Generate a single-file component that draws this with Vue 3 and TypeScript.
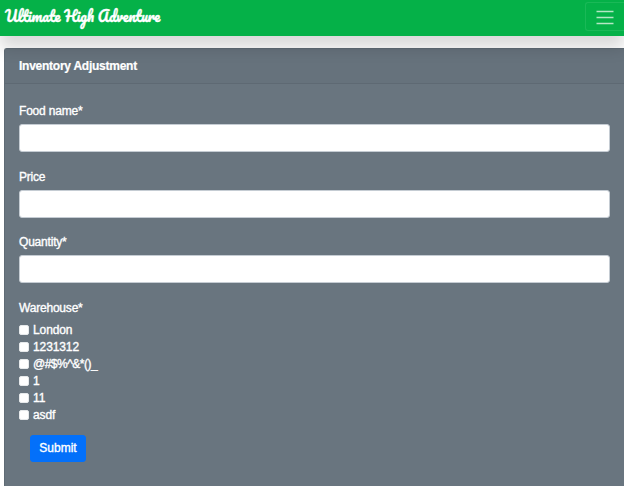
<script setup lang="ts">
import { reactive, ref } from 'vue'

interface Field {
  id: string
  label: string
}

const fields: Field[] = [
  { id: 'food', label: 'Food name*' },
  { id: 'price', label: 'Price' },
  { id: 'quantity', label: 'Quantity*' },
]
const values = reactive<Record<string, string>>({ food: '', price: '', quantity: '' })
const warehouses: string[] = ['London', '1231312', '@#$%^&*()_', '1', '11', 'asdf']
const selected = ref<string[]>([])
</script>

<template>
  <div class="page">
    <header class="navbar">
      <a class="brand">Ultimate High Adventure</a>
      <button class="toggler" type="button">
        <svg width="20" height="16" viewBox="0 0 20 16">
          <path d="M1.5 2.5h17M1.5 8.5h17M1.5 14.5h17" fill="none" stroke="#b4e7c4" stroke-width="1.3" />
        </svg>
      </button>
    </header>
    <main class="card">
      <div class="card-header">Inventory Adjustment</div>
      <form class="card-body" @submit.prevent>
        <div v-for="field in fields" :key="field.id" class="group">
          <label class="label" :for="field.id">{{ field.label }}</label>
          <input :id="field.id" v-model="values[field.id]" class="control" type="text" />
        </div>
        <div class="label">Warehouse*</div>
        <div class="options">
          <label v-for="name in warehouses" :key="name" class="option">
            <input v-model="selected" class="check" type="checkbox" :value="name" />
            <span :class="{ symbols: name.startsWith('@') }">{{ name }}</span>
          </label>
        </div>
        <button class="submit" type="submit">Submit</button>
      </form>
    </main>
  </div>
</template>

<style>
body {
  background: #fff;
  overflow: hidden;
}
</style>

<style scoped>
.page {
  height: 486px;
  overflow: hidden;
  display: flex;
  flex-direction: column;
  font-family: "Helvetica Neue", "Liberation Sans", Arial, sans-serif;
  font-size: 12px;
  color: #fff;
}
.page *,
.page {
  box-sizing: border-box;
}
.navbar {
  flex: none;
  height: 36px;
  display: flex;
  align-items: center;
  justify-content: space-between;
  padding-left: 5px;
  background: #05b148;
  box-shadow: 0 12px 16px rgba(0, 0, 0, 0.15);
  z-index: 1;
}
.brand {
  font-family: Pacifico, cursive;
  font-size: 14.3px;
  font-weight: 400;
  line-height: 20px;
  white-space: nowrap;
  padding-bottom: 4px;
  -webkit-text-stroke: 0.35px #fff;
}
.toggler {
  width: 39px;
  height: 29px;
  margin-bottom: 4px;
  padding: 2px 0 0;
  display: flex;
  align-items: center;
  justify-content: center;
  background: none;
  border: 1px solid #1ab957;
  border-right: 0;
  border-radius: 3px 0 0 3px;
}
.card {
  flex: 1;
  margin: 12px 0 0 4px;
  background: #69757f;
  border-left: 1px solid #5f6b75;
  border-top: 1px solid #5f6b75;
  border-radius: 3px 0 0 0;
}
.card-header {
  height: 35px;
  padding-left: 14px;
  line-height: 34px;
  font-weight: 700;
  letter-spacing: -0.25px;
  background: #66727c;
  border-bottom: 1px solid #5e6973;
  -webkit-text-stroke: 0.2px #fff;
}
.card-body {
  padding: 18px 14px 0;
}
.label {
  display: block;
  height: 18px;
  line-height: 18px;
  letter-spacing: -0.2px;
  -webkit-text-stroke: 0.35px #fff;
}
.group {
  height: 65.5px;
}
.control {
  display: block;
  width: 100%;
  height: 28px;
  margin-top: 4px;
  background: #fff;
  border: 1px solid #c5ccd3;
  border-radius: 3px;
  outline: 0;
}
.options {
  padding-top: 5px;
}
.option {
  height: 17px;
  display: flex;
  align-items: center;
  gap: 4px;
  letter-spacing: -0.1px;
  -webkit-text-stroke: 0.35px #fff;
}
.symbols {
  letter-spacing: -0.5px;
}
.check {
  appearance: none;
  width: 10px;
  height: 10px;
  margin: 0;
  background: #fff;
  border: 1px solid #e6e9eb;
  border-radius: 2px;
}
.submit {
  display: block;
  width: 56px;
  height: 27px;
  margin: 11px 0 0 11px;
  padding: 0;
  font: inherit;
  line-height: 25px;
  color: #fff;
  background: #0370fa;
  border: 1px solid #0370fa;
  border-radius: 3px;
  -webkit-text-stroke: 0.35px #fff;
}
</style>
